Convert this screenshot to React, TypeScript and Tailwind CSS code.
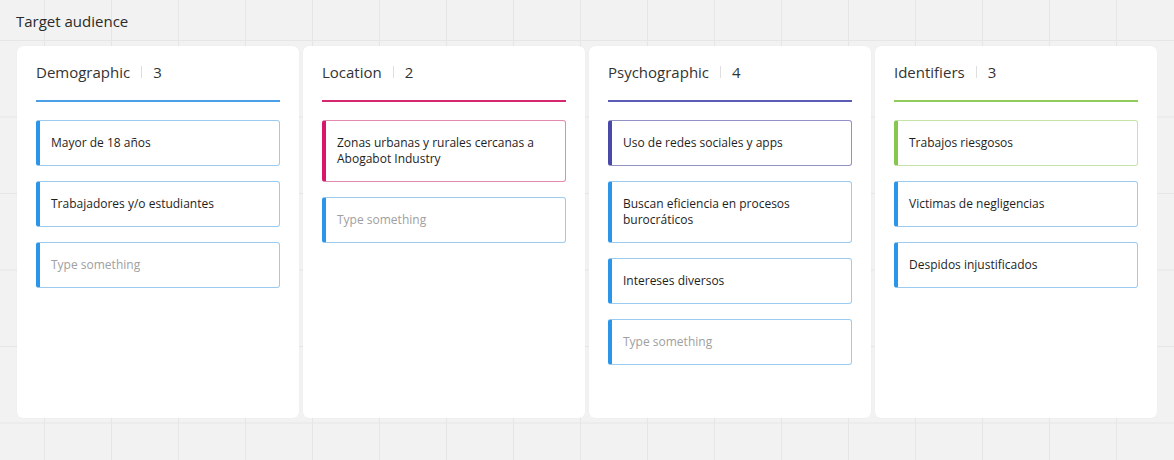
type Item = { text: string; bar: string; border: string; placeholder?: boolean };

type Column = {
  title: string;
  line: string;
  items: Item[];
};

const blue = { bar: "border-l-[#2b95e9]", border: "border-[#9ccbf1]" };

const columns: Column[] = [
  {
    title: "Demographic",
    line: "bg-[#4a9fe6]",
    items: [
      { text: "Mayor de 18 años", ...blue },
      { text: "Trabajadores y/o estudiantes", ...blue },
      { text: "Type something", ...blue, placeholder: true },
    ],
  },
  {
    title: "Location",
    line: "bg-[#d6266f]",
    items: [
      {
        text: "Zonas urbanas y rurales cercanas a Abogabot Industry",
        bar: "border-l-[#d8166a]",
        border: "border-[#e48aae]",
      },
      { text: "Type something", ...blue, placeholder: true },
    ],
  },
  {
    title: "Psychographic",
    line: "bg-[#5b5db4]",
    items: [
      {
        text: "Uso de redes sociales y apps",
        bar: "border-l-[#4a49a8]",
        border: "border-[#9292c6]",
      },
      { text: "Buscan eficiencia en procesos burocráticos", ...blue },
      { text: "Intereses diversos", ...blue },
      { text: "Type something", ...blue, placeholder: true },
    ],
  },
  {
    title: "Identifiers",
    line: "bg-[#8fcc5c]",
    items: [
      {
        text: "Trabajos riesgosos",
        bar: "border-l-[#86c84f]",
        border: "border-[#c6e4a8]",
      },
      { text: "Victimas de negligencias", ...blue },
      { text: "Despidos injustificados", ...blue },
    ],
  },
];

function Card({ col }: { col: Column }) {
  return (
    <div className="w-[282px] h-[372px] bg-white rounded-md px-[19px] shadow-[0_0_1px_rgba(0,0,0,0.08)]">
      <div className="h-[54px] flex items-center text-[15px] text-[#333] pb-[2px]">
        <span>{col.title}</span>
        <span className="mx-[11px] w-px h-[12px] bg-[#dedede]" />
        <span>{col.items.length}</span>
      </div>
      <div className={`h-[2px] ${col.line}`} />
      <div className="flex flex-col gap-[15px] mt-[18px]">
        {col.items.map((item, i) => (
          <div
            key={i}
            className={`border border-l-4 rounded-[3px] pl-[11px] pr-3 py-[14px] text-[12px] leading-[16px] ${item.border} ${item.bar} ${
              item.placeholder ? "text-[#a0a0a0]" : "text-[#1e1e1e]"
            }`}
          >
            {item.text}
          </div>
        ))}
      </div>
    </div>
  );
}

export default function App() {
  return (
    <div
      className="w-full h-[460px] bg-[#f2f2f2] bg-[linear-gradient(to_right,#e6e6e6_1px,transparent_1px),linear-gradient(to_bottom,#e6e6e6_1px,transparent_1px)] bg-size-[67px_76.5px] bg-position-[44px_40px] pl-[17px] overflow-hidden"
      style={{ fontFamily: '"Open Sans", "Noto Sans", sans-serif' }}
    >
      <div className="h-[46px] flex items-center -ml-px pb-[4px] text-[15px] text-[#2b2b2b]">
        Target audience
      </div>
      <div className="flex gap-[4px]">
        {columns.map((col) => (
          <Card key={col.title} col={col} />
        ))}
      </div>
    </div>
  );
}
